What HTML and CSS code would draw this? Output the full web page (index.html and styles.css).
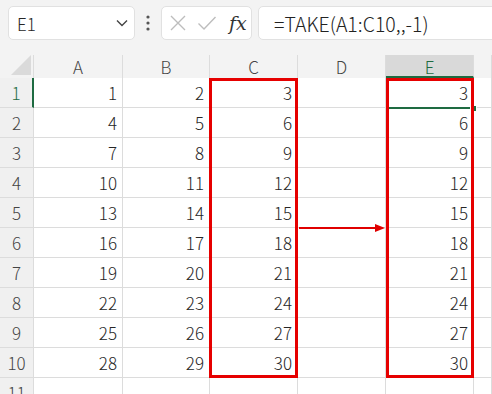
FILE: index.html
```html
<!DOCTYPE html>
<html lang="ja">
<head>
    <meta charset="UTF-8">
    <title>TAKE</title>
    <link rel="stylesheet" href="styles.css">
</head>
<body>
    <div class="toolbar">
        <div class="namebox">
            <span>E1</span>
            <svg class="chevron" width="12" height="8" viewBox="0 0 12 8"><path d="M1 1.5 L6 6.5 L11 1.5" fill="none" stroke="#444" stroke-width="1.4"/></svg>
        </div>
        <div class="dots">
            <svg width="4" height="16" viewBox="0 0 4 16"><circle cx="2" cy="2" r="1.6" fill="#555"/><circle cx="2" cy="8" r="1.6" fill="#555"/><circle cx="2" cy="14" r="1.6" fill="#555"/></svg>
        </div>
        <div class="fxbox">
            <svg width="18" height="18" viewBox="0 0 18 18"><path d="M2 2 L16 16 M16 2 L2 16" stroke="#bdbdbd" stroke-width="1.4"/></svg>
            <svg width="20" height="18" viewBox="0 0 20 18"><path d="M1.5 9.5 L7 15 L18.5 3" fill="none" stroke="#bdbdbd" stroke-width="1.4"/></svg>
            <span class="fx">fx</span>
        </div>
        <div class="formula">=TAKE(A1:C10,,-1)</div>
    </div>

    <div class="sheet">
        <div class="grid">
            <div class="corner"><span class="tri"></span></div>
            <div class="colhead">A</div>
            <div class="colhead">B</div>
            <div class="colhead">C</div>
            <div class="colhead">D</div>
            <div class="colhead active">E</div>
            <div class="colhead"></div>

            <div class="rowhead active">1</div><div class="cell">1</div><div class="cell">2</div><div class="cell">3</div><div class="cell"></div><div class="cell">3</div><div class="cell"></div>
            <div class="rowhead">2</div><div class="cell">4</div><div class="cell">5</div><div class="cell">6</div><div class="cell"></div><div class="cell">6</div><div class="cell"></div>
            <div class="rowhead">3</div><div class="cell">7</div><div class="cell">8</div><div class="cell">9</div><div class="cell"></div><div class="cell">9</div><div class="cell"></div>
            <div class="rowhead">4</div><div class="cell">10</div><div class="cell">11</div><div class="cell">12</div><div class="cell"></div><div class="cell">12</div><div class="cell"></div>
            <div class="rowhead">5</div><div class="cell">13</div><div class="cell">14</div><div class="cell">15</div><div class="cell"></div><div class="cell">15</div><div class="cell"></div>
            <div class="rowhead">6</div><div class="cell">16</div><div class="cell">17</div><div class="cell">18</div><div class="cell"></div><div class="cell">18</div><div class="cell"></div>
            <div class="rowhead">7</div><div class="cell">19</div><div class="cell">20</div><div class="cell">21</div><div class="cell"></div><div class="cell">21</div><div class="cell"></div>
            <div class="rowhead">8</div><div class="cell">22</div><div class="cell">23</div><div class="cell">24</div><div class="cell"></div><div class="cell">24</div><div class="cell"></div>
            <div class="rowhead">9</div><div class="cell">25</div><div class="cell">26</div><div class="cell">27</div><div class="cell"></div><div class="cell">27</div><div class="cell"></div>
            <div class="rowhead">10</div><div class="cell">28</div><div class="cell">29</div><div class="cell">30</div><div class="cell"></div><div class="cell">30</div><div class="cell"></div>
            <div class="rowhead">11</div><div class="cell"></div><div class="cell"></div><div class="cell"></div><div class="cell"></div><div class="cell"></div><div class="cell"></div>
        </div>

        <!-- overlays -->
        <div class="selection"></div>
        <div class="handle"></div>
        <div class="redbox box-c"></div>
        <div class="redbox box-e"></div>
        <svg class="arrow" width="90" height="12" viewBox="0 0 90 12">
            <path d="M1 6 L78 6" stroke="#e00000" stroke-width="2"/>
            <path d="M77 2 L87 6 L77 10 Z" fill="#e00000"/>
        </svg>
    </div>
</body>
</html>
```

FILE: styles.css
```css
body {
    margin: 0;
    font-family: "Noto Sans CJK JP", "Noto Sans", sans-serif;
    font-weight: 300;
    color: #262626;
    background: #f3f3f3;
    overflow: hidden;
}

.toolbar {
    display: flex;
    align-items: center;
    height: 46px;
    padding: 0 0 0 8px;
}

.namebox, .fxbox, .formula {
    height: 34px;
    background: white;
    border: 1px solid #e1e1e1;
    border-radius: 5px;
    box-sizing: border-box;
    display: flex;
    align-items: center;
}

.namebox {
    width: 127px;
    padding: 0 6px 0 8px;
    justify-content: space-between;
    font-size: 17px;
}

.dots {
    width: 26px;
    display: flex;
    justify-content: center;
}

.fxbox {
    width: 91px;
    padding: 0 0 0 7px;
    gap: 10px;
}

.fx {
    font-family: "DejaVu Serif", "Liberation Serif", serif;
    font-style: italic;
    font-size: 19px;
    color: #333;
    margin-left: 2px;
}

.formula {
    flex: 1;
    margin-left: 6px;
    margin-right: -10px;
    padding-left: 15px;
    font-size: 19.5px;
    color: #222;
}

.sheet {
    position: relative;
    margin-top: 9px;
    background: white;
}

.grid {
    display: grid;
    grid-template-columns: 34px 89px 87px 88px 88px 88px 1fr;
    grid-template-rows: 23px repeat(11, 30px);
}

.corner {
    position: relative;
    background: #f3f3f3;
    border-right: 1px solid #dcdcdc;
}

.tri {
    position: absolute;
    right: 2px;
    bottom: 3px;
    width: 0;
    height: 0;
    border-left: 20px solid transparent;
    border-bottom: 20px solid #dadada;
}

.colhead {
    background: #f3f3f3;
    border-right: 1px solid #dcdcdc;
    text-align: center;
    font-size: 17px;
    line-height: 23px;
    color: #444;
    box-sizing: border-box;
}

.colhead.active {
    background: #d9d9d9;
    color: #1e6b41;
    border-bottom: 2px solid #1e6b41;
}

.rowhead {
    background: #f0f0f0;
    border-right: 1px solid #dcdcdc;
    border-bottom: 1px solid #dcdcdc;
    text-align: center;
    font-size: 17px;
    line-height: 30px;
    color: #444;
    box-sizing: border-box;
}

.rowhead.active {
    color: #1e6b41;
    border-right: 2px solid #1e6b41;
}

.cell {
    border-right: 1px solid #dcdcdc;
    border-bottom: 1px solid #dcdcdc;
    text-align: right;
    padding-right: 5px;
    font-size: 17px;
    line-height: 30px;
    box-sizing: border-box;
}

.redbox {
    position: absolute;
    top: 23px;
    height: 300px;
    border: 3px solid #e60000;
    box-sizing: border-box;
}

.box-c {
    left: 209px;
    width: 89px;
}

.box-e {
    left: 386px;
    width: 88px;
}

.selection {
    position: absolute;
    left: 388px;
    top: 52px;
    width: 84px;
    height: 2px;
    background: #1e6b41;
}

.handle {
    position: absolute;
    left: 470px;
    top: 50px;
    width: 5px;
    height: 5px;
    background: #1e6b41;
    border: 1px solid white;
}

.arrow {
    position: absolute;
    left: 298px;
    top: 167px;
}
```
